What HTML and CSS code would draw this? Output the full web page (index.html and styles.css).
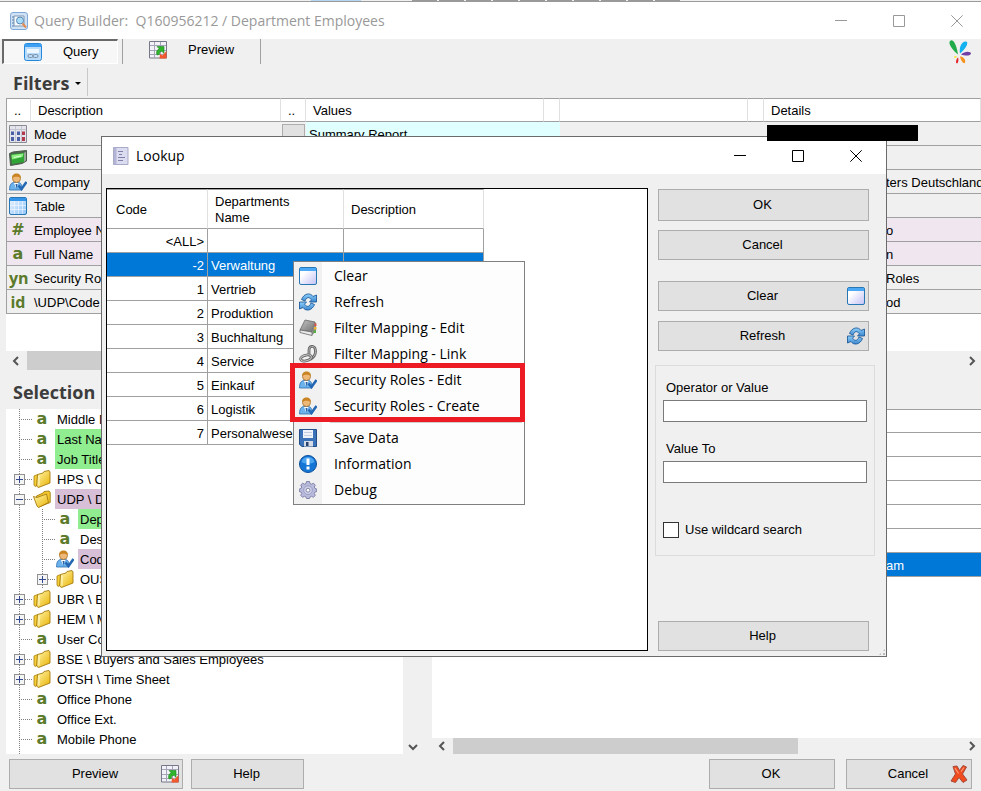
FILE: index.html
```html
<!DOCTYPE html>
<html lang="en">
<head>
    <meta charset="utf-8">
    <title>Query Builder</title>
    <link rel="stylesheet" href="styles.css">
</head>
<body>
    <!-- Icon set -->
    <svg class="sprite" aria-hidden="true">
        <defs>
            <linearGradient id="g-pane" x1="0" y1="0" x2="1" y2="1">
                <stop offset="0.3" stop-color="#ffffff"/><stop offset="1" stop-color="#c3c0f5"/>
            </linearGradient>
            <linearGradient id="g-blue" x1="0" y1="0" x2="0" y2="1">
                <stop offset="0" stop-color="#8fd0fa"/><stop offset="1" stop-color="#3a86d0"/>
            </linearGradient>
            <linearGradient id="g-gold" x1="0" y1="0" x2="1" y2="1">
                <stop offset="0" stop-color="#fff9b0"/><stop offset="1" stop-color="#e9b000"/>
            </linearGradient>
            <linearGradient id="g-grey" x1="0" y1="0" x2="1" y2="1">
                <stop offset="0" stop-color="#c4c4c4"/><stop offset="1" stop-color="#6f6f6f"/>
            </linearGradient>
            <linearGradient id="g-sky" x1="0" y1="0" x2="1" y2="1">
                <stop offset="0" stop-color="#eef6ff"/><stop offset="1" stop-color="#8fc4fa"/>
            </linearGradient>
        </defs>
        <symbol id="i-window" viewBox="0 0 18 18">
            <rect x="0.5" y="0.5" width="17" height="17" rx="1.5" fill="url(#g-pane)" stroke="#2777b5"/>
            <path d="M1 1h16v3H1z" fill="#4aa8f5"/>
        </symbol>
        <symbol id="i-table" viewBox="0 0 18 18">
            <rect x="0.5" y="0.5" width="17" height="17" rx="1.5" fill="url(#g-sky)" stroke="#2777b5"/>
            <path d="M1 1h16v3H1z" fill="#3494ea"/>
            <path d="M5.500 4v13M9.500 4v13M13.500 4v13M1 8.500h16M1 12.500h16" stroke="#fff" stroke-opacity="0.500"/>
        </symbol>
        <symbol id="i-query" viewBox="0 0 18 18">
            <rect x="0.5" y="0.5" width="17" height="17" rx="2" fill="#b9dbfa" stroke="#2388dc"/>
            <path d="M1 1h16v3H1z" fill="#3da0f2"/>
            <path d="M3 6h12v4H3z" fill="#eff7fe"/>
            <rect x="4" y="11.500" width="5" height="3" rx="1.500" fill="none" stroke="#7a8fa5"/>
            <rect x="9" y="11.500" width="5" height="3" rx="1.500" fill="none" stroke="#7a8fa5"/>
        </symbol>
        <symbol id="i-preview" viewBox="0 0 18 18">
            <path d="M0.5 0.5h17v16.500h-17z" fill="#f1f1f7" stroke="#77778a"/>
            <path d="M5.500 1v16M11.500 1v16M1 4.500h16M1 9.500h16M1 13.500h16" stroke="#a5a5b8"/>
            <path d="M8 5.500h7v7l-2-2.200c-2 0-3 1.200-2.500 3L8 14c-1.200-3 0-5 2.200-6.200z" fill="#2fb52c" stroke="#188419" stroke-width="0.600"/>
            <path d="M11 13l2.500 1.500L17.500 10v7.500h-7z" fill="#f2582b"/>
        </symbol>
        <symbol id="i-mode" viewBox="0 0 18 18">
            <path d="M0.500 0.500h17v17h-17z" fill="#e4e4ec" stroke="#8a8a94"/>
            <path d="M1 4.500h16M6.500 1v16M12.500 1v16" stroke="#c5c5d0"/>
            <path d="M2 6.500h3V10H2zM2 12h3v4H2zM8 6.500h3V10H8zM8 12h3v4H8z" fill="#4a5fa5"/>
            <path d="M13 6.500h3V10h-3zM13 12h3v4h-3z" fill="#b23a4c"/>
        </symbol>
        <symbol id="i-product" viewBox="0 0 18 18">
            <path d="M0.500 4.500L4 3l13.500-1.500V12L13 14.500 1.500 16.500z" fill="#4c6b4c" stroke="#4b594b"/>
            <path d="M2 5.500l13-1.500v9L3 15z" fill="#2fa535"/>
            <path d="M2.500 6l12-1.500-1 3.500L3 10.500z" fill="#8cf07c"/>
            <path d="M5 8.500l7-1.500" stroke="#e2ffe0"/>
            <path d="M15 4l2-1.500v9L15 13z" fill="#9aa79a"/>
        </symbol>
        <symbol id="i-person" viewBox="0 0 18 18">
            <path d="M0.500 17c0-4 1-7 4-7.500h5c3 0.500 3.500 3 3.500 7.500z" fill="#6cb2ec" stroke="#2f6fae" stroke-width="0.800"/>
            <path d="M5 10l2 5 2.500-5z" fill="#fff"/>
            <path d="M6.500 11l1 5 1-5z" fill="#2c5f9e"/>
            <circle cx="7.500" cy="5.500" r="4" fill="#eeb877" stroke="#9c6a26" stroke-width="0.700"/>
            <path d="M3.300 5.500C2.500 2 5 0.500 7.500 0.500s5 1.500 4.200 5C11 3.800 9 3.800 7.500 3.800s-3.500 0-4.200 1.700z" fill="#c98424"/>
            <path d="M9.500 12.500l3 3.500 5-7" fill="none" stroke="#2468b4" stroke-width="2.600"/>
        </symbol>
        <symbol id="i-folder" viewBox="0 0 18 18">
            <path d="M1 6l3.500-1.500V15L2 16.500 1 15z" fill="#f5cf35" stroke="#a67c10" stroke-width="0.800"/>
            <path d="M4.500 4.500L10 3l1-1.500L16 0.500l1 1.500v11L5.500 17.500 3.500 16z" fill="url(#g-gold)" stroke="#a67c10" stroke-width="0.900"/>
            <path d="M6 5.500v10" stroke="#fffbd0"/>
        </symbol>
        <symbol id="i-folder-open" viewBox="0 0 18 18">
            <path d="M3.500 6L10 3l1-1.500L16 1l1.200 1.500v10L6 17z" fill="#f1c62e" stroke="#a67c10" stroke-width="0.900"/>
            <path d="M0.500 6.500L4 7.500l9.500-3.500L15.500 12.500 5.500 17.500 4 16z" fill="url(#g-gold)" stroke="#a67c10" stroke-width="0.900"/>
        </symbol>
        <symbol id="i-refresh" viewBox="0 0 18 18">
            <path d="M2.500 6.500C5 0 11.500-0.500 14 3.500L17.500 2v7h-7l2-2.200C10 3.500 7.500 4 6 8z" fill="url(#g-blue)" stroke="#1f5c9c" stroke-width="0.900"/>
            <path d="M15.500 11.500C13 18 6.500 18.500 4 14.500L0.500 16V9h7l-2 2.200C8 14.500 10.500 14 12 10z" fill="url(#g-blue)" stroke="#1f5c9c" stroke-width="0.900"/>
        </symbol>
        <symbol id="i-book" viewBox="0 0 18 18">
            <path d="M6 1l10 2-3 10L1 11z" fill="url(#g-grey)" stroke="#666" stroke-width="0.800"/>
            <path d="M1 11l12 2v3.500L1 13.500z" fill="#ececec" stroke="#666" stroke-width="0.800"/>
            <path d="M13 13l3-10 1 1v8l-4 4.500z" fill="#888"/>
            <path d="M15.500 4.500h2v2.500h-2z" fill="#e2503c"/>
            <path d="M15 8h2.500v2.500H15z" fill="#edb22f"/>
            <path d="M14.500 11.500H17V14h-2.500z" fill="#57b13f"/>
        </symbol>
        <symbol id="i-link" viewBox="0 0 18 18">
            <path d="M10 10V5c0-3 2-4 4-3.500s2.500 2.500 2.500 5c0 3.500-2 6-5.500 8" fill="none" stroke="#666" stroke-width="2.800"/>
            <path d="M10 10V5c0-3 2-4 4-3.500s2.500 2.500 2.500 5c0 3.500-2 6-5.500 8" fill="none" stroke="#b5b5b5" stroke-width="1"/>
            <ellipse cx="7" cy="13" rx="5.500" ry="2.800" transform="rotate(-14 7 13)" fill="none" stroke="#666" stroke-width="2.800"/>
            <ellipse cx="7" cy="13" rx="5.500" ry="2.800" transform="rotate(-14 7 13)" fill="none" stroke="#c9c9c9" stroke-width="1"/>
        </symbol>
        <symbol id="i-save" viewBox="0 0 18 18">
            <path d="M0.500 0.500h17v17H3l-2.500-2z" fill="#3b72b8" stroke="#234e8a"/>
            <path d="M4 1h10v8H4z" fill="#f0f4fa"/>
            <path d="M5 3.500h8M5 6.500h8" stroke="#c3cede"/>
            <path d="M5 12h9v5.500H5z" fill="#d6dce6"/>
            <path d="M7 13h2.500v4H7z" fill="#28436e"/>
        </symbol>
        <symbol id="i-info" viewBox="0 0 18 18">
            <circle cx="9" cy="9" r="8.500" fill="#1475d4" stroke="#0b4f9b"/>
            <path d="M2.500 7a6.700 6.500 0 0 1 13 0c-3 2-10 2-13 0z" fill="#4ba4f0"/>
            <path d="M7.500 3.500h3V10h-3zM7.500 11.500h3v3h-3z" fill="#fff"/>
        </symbol>
        <symbol id="i-gear" viewBox="0 0 18 18">
            <path d="M7.500 0.500h3l0.500 2 1.500 0.700 2-1 1.800 2-1 1.800 0.700 1.500 1.800 0.500v2.500l-1.800 0.500-0.700 1.500 1 2-2 1.800-1.800-1-1.500 0.700-0.500 1.500h-3L7 16l-1.500-0.700-2 1-1.800-2 1-1.800L2 11l-1.700-0.500V8L2 7.500 2.700 6l-1-2 2-1.800 1.800 1L7 2.500z" fill="#b9bbdc" stroke="#6f7199" stroke-width="0.800"/>
            <circle cx="9" cy="9.200" r="4.300" fill="#cfd1ea" stroke="#8b8db4" stroke-width="0.700"/>
            <circle cx="9" cy="9.200" r="1.900" fill="#fff" stroke="#6f7199" stroke-width="0.800"/>
        </symbol>
        <symbol id="i-cross" viewBox="0 0 18 18">
            <path d="M3 1.500l4-0.500 2.500 4.500L13 0.500l3.500 1.500L12.500 9l4.500 6-4 2.500L9 12.500l-3.500 5L1 16l4.500-7z" fill="#f04a1d" stroke="#a34a3a"/>
            <path d="M5 3l3.500 5.500M14 2.500l-3 4" stroke="#ff9a78" stroke-width="1.200"/>
        </symbol>
        <symbol id="i-app" viewBox="0 0 18 18">
            <rect x="0.500" y="0.500" width="17" height="17" rx="2.500" fill="#cfe1f5" stroke="#7fa9d6"/>
            <path d="M4 4h10v10H4z" fill="#f6fbff" stroke="#7d97b5"/>
            <path d="M2 5h2M2 8h2M2 11h2M2 14h2" stroke="#5e83ac"/>
            <circle cx="10" cy="8.500" r="3.500" fill="#a8dcf8" stroke="#5b88b2"/>
            <path d="M12.500 11.500l3.500 4" stroke="#e58a50" stroke-width="2"/>
        </symbol>
        <symbol id="i-form" viewBox="0 0 18 18">
            <path d="M1.500 0.500h14.500v17H1.500z" fill="#dcdcf0" stroke="#a9a9c8"/>
            <path d="M2 1h2.500v16H2z" fill="#b4b4d6"/>
            <path d="M6 4.500h5M7 7.500h3M6 10.500h7M6 13.500h5" stroke="#7f7fa8"/>
        </symbol>
        <symbol id="i-logo" viewBox="0 0 24 24">
            <path d="M10 15C4 10 0 4 2 1.500S8 2 10 15z" fill="#22ab4b"/>
            <path d="M12 14c-1-6 1-11 5-12s3 5-5 12z" fill="#13b1f0"/>
            <path d="M13 15c4-4 10-3 10-1s-5 3-10 1z" fill="#6f3fa5"/>
            <path d="M12 17c4 0 6 4 5 6s-4-1-5-6z" fill="#f7921e"/>
            <path d="M10 18c1 2 0 6-1 6s-2-3 1-6z" fill="#e6242c"/>
            <path d="M9 17c-1 2-3 2-3 1s1-2 3-1z" fill="#f7e94a"/>
        </symbol>
        <symbol id="i-min" viewBox="0 0 12 12"><path d="M0 5.500h12" stroke="currentColor" fill="none"/></symbol>
        <symbol id="i-max" viewBox="0 0 12 12"><path d="M0.500 0.500h11v11h-11z" stroke="currentColor" fill="none"/></symbol>
        <symbol id="i-close" viewBox="0 0 12 12"><path d="M0.300 0.300l11.400 11.400M11.700 0.300L0.300 11.700" stroke="currentColor" fill="none"/></symbol>
        <symbol id="i-left" viewBox="0 0 10 10"><path d="M7 1L3 5l4 4" stroke="#555" stroke-width="2" fill="none"/></symbol>
        <symbol id="i-right" viewBox="0 0 10 10"><path d="M3 1l4 4-4 4" stroke="#555" stroke-width="2" fill="none"/></symbol>
        <symbol id="i-down" viewBox="0 0 10 10"><path d="M1 3l4 4 4-4" stroke="#555" stroke-width="2" fill="none"/></symbol>
    </svg>

    <div class="window">
        <div class="backdrop-strip"></div>
        <header class="titlebar inactive">
            <svg class="icon"><use href="#i-app"/></svg>
            <h1 class="caption">Query Builder:&nbsp; Q160956212 / Department Employees</h1>
            <div class="window-controls">
                <button aria-label="Minimize"><svg><use href="#i-min"/></svg></button>
                <button aria-label="Maximize"><svg><use href="#i-max"/></svg></button>
                <button aria-label="Close"><svg><use href="#i-close"/></svg></button>
            </div>
        </header>

        <nav class="tabs">
            <button class="tab active"><svg class="icon"><use href="#i-query"/></svg><span>Query</span></button>
            <button class="tab"><svg class="icon"><use href="#i-preview"/></svg><span>Preview</span></button>
            <svg class="logo"><use href="#i-logo"/></svg>
        </nav>

        <div class="section-head">
            <h2>Filters</h2>
            <span class="caret"></span>
        </div>

        <section class="filters">
            <table class="filter-table">
                <colgroup>
                    <col class="c-icon"><col class="c-desc"><col class="c-btn"><col class="c-values">
                    <col class="c-gap"><col class="c-blank"><col class="c-gap"><col>
                </colgroup>
                <thead>
                    <tr><th class="dots">..</th><th>Description</th><th class="dots">..</th><th>Values</th><th></th><th></th><th></th><th>Details</th></tr>
                </thead>
                <tbody>
                    <tr><td><svg class="icon"><use href="#i-mode"/></svg></td><td>Mode</td><td><button class="pick" aria-label="Pick"></button></td><td class="value" colspan="2">Summary Report</td><td></td><td></td><td></td></tr>
                    <tr><td><svg class="icon"><use href="#i-product"/></svg></td><td>Product</td><td></td><td></td><td></td><td></td><td></td><td></td></tr>
                    <tr><td><svg class="icon"><use href="#i-person"/></svg></td><td>Company</td><td></td><td></td><td></td><td></td><td></td><td class="detail">ters Deutschland</td></tr>
                    <tr><td><svg class="icon"><use href="#i-table"/></svg></td><td>Table</td><td></td><td></td><td></td><td></td><td></td><td></td></tr>
                    <tr class="pink"><td><b class="glyph">#</b></td><td>Employee Name</td><td></td><td></td><td></td><td></td><td></td><td class="detail">o</td></tr>
                    <tr class="pink"><td><b class="glyph">a</b></td><td>Full Name</td><td></td><td></td><td></td><td></td><td></td><td class="detail">n</td></tr>
                    <tr><td><b class="glyph pair">yn</b></td><td>Security Roles</td><td></td><td></td><td></td><td></td><td></td><td class="detail">Roles</td></tr>
                    <tr><td><b class="glyph pair">id</b></td><td>\UDP\Code</td><td></td><td></td><td></td><td></td><td></td><td class="detail">od</td></tr>
                </tbody>
            </table>
        </section>
        <div class="hscroll">
            <svg><use href="#i-left"/></svg><div class="track"><div class="thumb wide"></div></div><svg><use href="#i-right"/></svg>
        </div>

        <div class="section-head selection-head"><h2>Selection</h2></div>

        <main class="selection">
            <ul class="tree">
                <li><span class="rail"></span><b class="glyph">a</b><span class="label">Middle Name</span></li>
                <li><span class="rail"></span><b class="glyph">a</b><span class="label green">Last Name</span></li>
                <li><span class="rail"></span><b class="glyph">a</b><span class="label green">Job Title</span></li>
                <li><span class="rail"><i class="box plus"></i></span><svg class="icon"><use href="#i-folder"/></svg><span class="label">HPS \ C</span></li>
                <li><span class="rail"><i class="box"></i></span><svg class="icon"><use href="#i-folder-open"/></svg><span class="label mauve">UDP \ Departments</span></li>
                <li><span class="stem"></span><span class="rail"></span><b class="glyph">a</b><span class="label green">Department</span></li>
                <li><span class="stem"></span><span class="rail"></span><b class="glyph">a</b><span class="label">Description</span></li>
                <li><span class="stem"></span><span class="rail"></span><svg class="icon"><use href="#i-person"/></svg><span class="label mauve">Code</span></li>
                <li><span class="stem"></span><span class="rail"><i class="box plus"></i></span><svg class="icon"><use href="#i-folder"/></svg><span class="label">OUS</span></li>
                <li><span class="rail"><i class="box plus"></i></span><svg class="icon"><use href="#i-folder"/></svg><span class="label">UBR \ B</span></li>
                <li><span class="rail"><i class="box plus"></i></span><svg class="icon"><use href="#i-folder"/></svg><span class="label">HEM \ M</span></li>
                <li><span class="rail"></span><b class="glyph">a</b><span class="label">User Code</span></li>
                <li><span class="rail"><i class="box plus"></i></span><svg class="icon"><use href="#i-folder"/></svg><span class="label">BSE \ Buyers and Sales Employees</span></li>
                <li><span class="rail"><i class="box plus"></i></span><svg class="icon"><use href="#i-folder"/></svg><span class="label">OTSH \ Time Sheet</span></li>
                <li><span class="rail"></span><b class="glyph">a</b><span class="label">Office Phone</span></li>
                <li><span class="rail"></span><b class="glyph">a</b><span class="label">Office Ext.</span></li>
                <li><span class="rail"></span><b class="glyph">a</b><span class="label">Mobile Phone</span></li>
                <li><span class="stem"></span></li>
            </ul>
            <div class="vscroll"><svg><use href="#i-down"/></svg></div>
            <div class="chosen">
                <table class="chosen-table">
                    <thead>
                        <tr><th></th></tr>
                    </thead>
                    <tbody>
                        <tr><td></td></tr>
                        <tr><td></td></tr>
                        <tr><td></td></tr>
                        <tr><td></td></tr>
                        <tr><td></td></tr>
                        <tr class="selected"><td>am</td></tr>
                    </tbody>
                </table>
                <div class="hscroll">
                    <svg><use href="#i-left"/></svg><div class="track"><div class="thumb"></div></div><svg><use href="#i-right"/></svg>
                </div>
            </div>
        </main>

        <footer class="actions">
            <button class="btn preview">Preview<svg class="icon"><use href="#i-preview"/></svg></button>
            <button class="btn help">Help</button>
            <button class="btn ok">OK</button>
            <button class="btn cancel">Cancel<svg class="icon"><use href="#i-cross"/></svg></button>
        </footer>
    </div>

    <!-- Lookup dialog -->
    <div class="dialog" role="dialog" aria-label="Lookup">
        <header class="titlebar">
            <svg class="icon"><use href="#i-form"/></svg>
            <h2 class="caption">Lookup</h2>
            <div class="window-controls">
                <button aria-label="Minimize"><svg><use href="#i-min"/></svg></button>
                <button aria-label="Maximize"><svg><use href="#i-max"/></svg></button>
                <button aria-label="Close"><svg><use href="#i-close"/></svg></button>
            </div>
        </header>
        <div class="dialog-body">
            <div class="lookup-grid">
                <table class="lookup-table">
                    <colgroup><col class="c-code"><col class="c-name"><col class="c-text"></colgroup>
                    <thead>
                        <tr><th>Code</th><th>Departments<br>Name</th><th>Description</th></tr>
                    </thead>
                    <tbody>
                        <tr><td>&lt;ALL&gt;</td><td></td><td></td></tr>
                        <tr class="selected"><td>-2</td><td>Verwaltung</td><td>Verwaltung</td></tr>
                        <tr><td>1</td><td>Vertrieb</td><td></td></tr>
                        <tr><td>2</td><td>Produktion</td><td></td></tr>
                        <tr><td>3</td><td>Buchhaltung</td><td></td></tr>
                        <tr><td>4</td><td>Service</td><td></td></tr>
                        <tr><td>5</td><td>Einkauf</td><td></td></tr>
                        <tr><td>6</td><td>Logistik</td><td></td></tr>
                        <tr><td>7</td><td>Personalwesen</td><td></td></tr>
                    </tbody>
                </table>
            </div>
            <aside class="side">
                <div class="side-group confirm">
                    <button class="btn">OK</button>
                    <button class="btn">Cancel</button>
                </div>
                <div class="side-group">
                    <button class="btn">Clear<svg class="icon"><use href="#i-window"/></svg></button>
                    <button class="btn">Refresh<svg class="icon"><use href="#i-refresh"/></svg></button>
                </div>
                <div class="criteria">
                    <label for="value-from">Operator or Value</label>
                    <input type="text" id="value-from">
                    <label for="value-to">Value To</label>
                    <input type="text" id="value-to">
                    <div class="wildcard">
                        <input type="checkbox" id="wildcard">
                        <label for="wildcard">Use wildcard search</label>
                    </div>
                </div>
                <button class="btn help">Help</button>
            </aside>
        </div>
        <span class="grip"></span>
    </div>

    <div class="redacted"></div>

    <!-- Context menu -->
    <div class="menu" role="menu">
        <button role="menuitem"><svg class="icon"><use href="#i-window"/></svg>Clear</button>
        <button role="menuitem"><svg class="icon"><use href="#i-refresh"/></svg>Refresh</button>
        <button role="menuitem"><svg class="icon"><use href="#i-book"/></svg>Filter Mapping - Edit</button>
        <button role="menuitem"><svg class="icon"><use href="#i-link"/></svg>Filter Mapping - Link</button>
        <div class="marked">
            <button role="menuitem"><svg class="icon"><use href="#i-person"/></svg>Security Roles - Edit</button>
            <button role="menuitem"><svg class="icon"><use href="#i-person"/></svg>Security Roles - Create</button>
        </div>
        <div class="separator"></div>
        <button role="menuitem"><svg class="icon"><use href="#i-save"/></svg>Save Data</button>
        <button role="menuitem"><svg class="icon"><use href="#i-info"/></svg>Information</button>
        <button role="menuitem"><svg class="icon"><use href="#i-gear"/></svg>Debug</button>
    </div>
</body>
</html>
```
FILE: styles.css
```css
* {
    margin: 0;
    padding: 0;
    box-sizing: border-box;
}

body {
    background: #f0f0f0;
    color: #000;
    font-family: "Liberation Sans", Arial, sans-serif;
    font-size: 13px;
    line-height: 16px;
    height: 100vh;
    overflow: hidden;
    position: relative;
}

button {
    font: inherit;
    color: inherit;
    background: none;
    border: none;
}

.sprite {
    position: absolute;
    width: 0;
    height: 0;
}

.icon {
    width: 18px;
    height: 18px;
    flex: none;
    display: block;
}

.window {
    display: flex;
    flex-direction: column;
    height: 100vh;
}

/* Edge of the toolbar behind the window */
.backdrop-strip {
    height: 2px;
    flex: none;
    background:
        linear-gradient(#b5d5f5, #b5d5f5) 311px 0 / 50px 1px no-repeat,
        repeating-linear-gradient(90deg, #999 0 25px, #f0f0f0 25px 27px) 412px 0 / 270px 1px no-repeat,
        #f0f0f0;
    border-bottom: 1px solid #9a9a9a;
}

/* Title bars */
.titlebar {
    display: flex;
    align-items: center;
    flex: none;
    height: 37px;
    padding-left: 10px;
    background: #fff;
}

.caption {
    flex: 1;
    margin-left: 6px;
    font-family: "Open Sans", "Segoe UI", sans-serif;
    font-size: 14px;
    font-weight: normal;
    line-height: 20px;
    white-space: nowrap;
}

.inactive {
    color: #999;
}

.window-controls {
    display: flex;
    margin-right: 1px;
}

.window-controls button {
    width: 58px;
    height: 36px;
    padding: 0 23px;
}

.window-controls svg {
    width: 12px;
    height: 12px;
    display: block;
}

.inactive .window-controls {
    margin-right: -5px;
}

/* Tabs */
.tabs {
    display: flex;
    flex: none;
    height: 25px;
    padding-left: 2px;
}

.tab {
    display: flex;
    align-items: center;
    width: 138px;
    gap: 21px;
    padding: 0 0 4px 26px;
    border-right: 1px solid #a0a0a0;
}

.tab.active {
    width: 116px;
    margin-right: 5px;
    padding: 0 0 0 20px;
    border: 1px solid #fff;
    border-top: 2px solid #696969;
    border-left: 2px solid #696969;
    background: #f7f7f7;
    box-shadow: 4px 0 0 #f0f0f0, 5px 0 0 #a0a0a0;
}

.logo {
    width: 24px;
    height: 25px;
    margin-left: auto;
    margin-right: 9px;
}

.section-head {
    display: flex;
    align-items: center;
    align-self: flex-start;
    flex: none;
    height: 28px;
    margin: 4px 0 2px;
    padding: 2px 6px 0 13px;
    border-right: 1px solid #c8c8c8;
}

.section-head h2 {
    font-family: "Open Sans", "Segoe UI", sans-serif;
    font-size: 18px;
    line-height: 24px;
    color: #3c3c3c;
}

.caret {
    margin-left: 6px;
    border: 3px solid transparent;
    border-top-color: #000;
    border-bottom: none;
}

.selection-head {
    height: 39px;
    margin: 0;
    padding-top: 5px;
    border-right: none;
}

/* Filters table */
.filters {
    flex: none;
    height: 253px;
    margin-left: 6px;
    background: #fff;
    overflow: hidden;
}

table {
    border-collapse: separate;
    border-spacing: 0;
    table-layout: fixed;
}

th {
    font-weight: normal;
    text-align: left;
}

.filter-table {
    width: 100%;
    border-left: 1px solid #a0a0a0;
}

.c-icon { width: 24px; }
.c-desc { width: 250px; }
.c-btn { width: 25px; }
.c-values { width: 238px; }
.c-gap { width: 16px; }
.c-blank { width: 188px; }

.filter-table th {
    height: 24px;
    padding: 2px 0 0 7px;
    border-top: 1px solid #a0a0a0;
    border-bottom: 1px solid #a0a0a0;
    border-right: 1px solid #e0e0e0;
    background: #fff;
}

.filter-table td {
    height: 24px;
    padding: 2px 0 0 3px;
    border-bottom: 1px solid #a0a0a0;
    background: #f0f0f0;
    white-space: nowrap;
}

.filter-table td:first-child {
    padding: 0 0 0 2px;
}

.filter-table .pink td {
    background: #f0e6ef;
}

.filter-table td.value {
    background: #e0ffff;
}

.filter-table td.detail {
    padding-left: 122px;
}

.pick {
    display: block;
    width: 23px;
    height: 21px;
    margin-left: -2px;
    background: #e1e1e1;
    border: 1px solid #adadad;
}

.glyph {
    flex: none;
    display: block;
    width: 18px;
    font-family: "DejaVu Sans", Verdana, sans-serif;
    font-size: 16px;
    line-height: 18px;
    text-align: center;
    color: #5b7a2a;
}

.pair {
    font-family: "Open Sans", sans-serif;
    font-size: 16px;
}

/* Scroll bars */
.hscroll {
    display: flex;
    align-items: center;
    flex: none;
    height: 19px;
    margin-left: 6px;
    background: #f0f0f0;
}

.hscroll svg, .vscroll svg {
    flex: none;
    width: 10px;
    height: 10px;
    margin: 0 6px 0 5px;
}

.hscroll svg:last-child {
    margin: 0 4px 0 6px;
}

.track {
    flex: 1;
    align-self: stretch;
}

.thumb {
    width: 68%;
    height: 100%;
    background: #cdcdcd;
}

.thumb.wide {
    width: 80%;
}

.vscroll {
    display: flex;
    flex-direction: column;
    justify-content: flex-end;
    width: 29px;
    padding-bottom: 2px;
    background: #f0f0f0;
}

/* Field selection */
.selection {
    display: flex;
    flex: 1;
    min-height: 0;
    margin-left: 6px;
}

.tree {
    width: 397px;
    background: #fff;
    list-style: none;
    overflow: hidden;
}

.tree li {
    display: flex;
    align-items: center;
    height: 20px;
    white-space: nowrap;
}

.label {
    height: 20px;
    margin-left: 4px;
    padding: 3px 2px 1px;
}

.green { background: #90ee90; }
.mauve { background: #d8bfd8; }

.stem, .rail {
    flex: none;
    position: relative;
    align-self: stretch;
    width: 23px;
    background: repeating-linear-gradient(#808080 0 1px, transparent 1px 2px) 13px 0 / 1px 100% no-repeat;
}

.rail {
    width: 27px;
    background:
        repeating-linear-gradient(#808080 0 1px, transparent 1px 2px) 13px 0 / 1px 100% no-repeat,
        repeating-linear-gradient(90deg, #808080 0 1px, transparent 1px 2px) 13px 10px / 13px 1px no-repeat;
}

/* Expand box sits on top of the dotted line */
.box {
    position: absolute;
    left: 8px;
    top: 5px;
    width: 11px;
    height: 11px;
    border: 1px solid #919191;
    background: linear-gradient(#34488f, #34488f) center / 7px 1px no-repeat, #f4f4f4;
}

.box.plus {
    background:
        linear-gradient(#34488f, #34488f) center / 7px 1px no-repeat,
        linear-gradient(#34488f, #34488f) center / 1px 7px no-repeat,
        #f4f4f4;
}

.chosen {
    display: flex;
    flex-direction: column;
    justify-content: space-between;
    flex: 1;
    background: #fff;
}

.chosen .hscroll {
    height: 16px;
    margin-left: 0;
}

.chosen-table {
    width: 100%;
    border-top: 1px solid #a0a0a0;
}

.chosen-table th {
    height: 23px;
    border-bottom: 1px solid #a0a0a0;
}

.chosen-table td {
    height: 24px;
    padding: 2px 0 0 454px;
    border-bottom: 1px solid #a0a0a0;
}

.selected td {
    background: #0078d7;
    color: #fff;
}

/* Buttons */
.btn {
    position: relative;
    height: 30px;
    padding-right: 2px;
    background: #e1e1e1;
    border: 1px solid #adadad;
}

.btn .icon {
    position: absolute;
    top: 5px;
    right: 3px;
}

.actions {
    display: flex;
    flex: none;
    gap: 8px;
    height: 37px;
    padding: 5px 9px 0;
}

.actions .preview { width: 174px; }
.actions .help { width: 113px; }
.actions .ok { width: 126px; margin-left: auto; margin-right: 3px; }
.actions .cancel { width: 126px; }

/* Lookup dialog */
.dialog {
    position: absolute;
    left: 101px;
    right: 94px;
    top: 136px;
    display: flex;
    flex-direction: column;
    background: #f0f0f0;
    border: 1px solid #6b6b6b;
}

.dialog-body {
    display: flex;
    gap: 7px;
    padding: 14px 11px 5px 4px;
}

.lookup-grid {
    flex: 1;
    min-height: 463px;
    background: #fff;
    border: 1px solid #000;
}

.lookup-table {
    width: 377px;
}

.c-code { width: 101px; }
.c-name { width: 136px; }
.c-text { width: 140px; }

.lookup-table th {
    height: 40px;
    padding: 2px 0 0 7px;
    border-top: 1px solid #a0a0a0;
    border-bottom: 1px solid #a0a0a0;
    border-right: 1px solid #e0e0e0;
}

.lookup-table th:first-child {
    padding-left: 9px;
}

.lookup-table td {
    height: 24px;
    padding: 2px 3px 0;
    border-bottom: 1px solid #a0a0a0;
    border-right: 1px solid #a0a0a0;
    white-space: nowrap;
}

.lookup-table td:first-child {
    text-align: right;
}

.side {
    display: flex;
    flex-direction: column;
    width: 220px;
}

.side-group {
    display: flex;
    flex-direction: column;
    gap: 10px;
    margin: 1px 6px 14px 3px;
}

.side-group.confirm {
    gap: 9px;
    margin-bottom: 20px;
}

.confirm .btn:first-child {
    height: 32px;
}

.side > .help {
    margin: auto 6px 0 3px;
}

.criteria {
    display: flex;
    flex-direction: column;
    padding: 14px 7px 17px;
    border: 1px solid #dcdcdc;
}

.criteria > label {
    padding-left: 3px;
}

.criteria input[type="text"] {
    height: 22px;
    margin: 4px 0 19px;
    border: 1px solid #7a7a7a;
    background: #fff;
}

.wildcard {
    display: flex;
    align-items: center;
    gap: 6px;
    margin-top: 20px;
}

.wildcard input {
    appearance: none;
    width: 16px;
    height: 16px;
    border: 1px solid #333;
    background: #fff;
}

.grip {
    position: absolute;
    right: 0;
    bottom: 0;
    width: 8px;
    height: 8px;
    background: radial-gradient(#bbb 1px, transparent 1px) 0 0 / 4px 4px;
    clip-path: polygon(100% 0, 100% 100%, 0 100%);
}

.redacted {
    position: absolute;
    left: 767px;
    top: 125px;
    width: 151px;
    height: 16px;
    background: #000;
}

/* Context menu */
.menu {
    position: absolute;
    left: 293px;
    top: 261px;
    width: 232px;
    padding: 1px 0;
    border: 1px solid #808080;
    background: linear-gradient(90deg, #f1f1f1 28px, #fdfdfd 28px);
    font-family: "Open Sans", "Segoe UI", sans-serif;
    font-size: 14px;
}

.menu button {
    display: flex;
    align-items: center;
    gap: 17px;
    width: 100%;
    height: 26px;
    padding-left: 5px;
    white-space: nowrap;
}

.marked {
    position: relative;
}

/* Red frame drawn around the highlighted items */
.marked::after {
    content: "";
    position: absolute;
    inset: -4px -1px -3px -4px;
    border: 5px solid #ed1c24;
}

.separator {
    height: 1px;
    margin: 3px 2px 2px 36px;
    background: #d0d0d0;
}
```
